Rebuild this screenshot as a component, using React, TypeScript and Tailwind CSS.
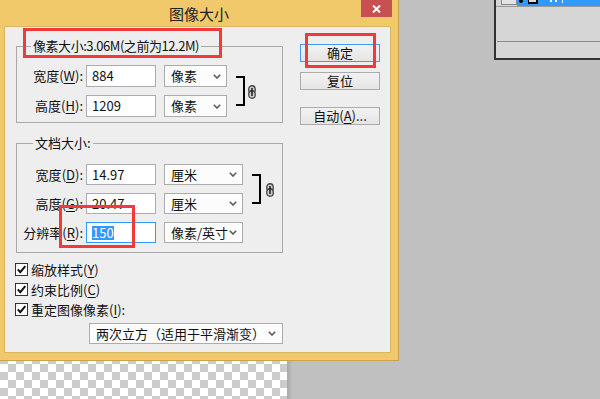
import type React from "react"

function Chevron() {
  return (
    <svg width="8" height="5" viewBox="0 0 8 5" className="shrink-0">
      <path d="M0.8 0.8 L4 4 L7.2 0.8" fill="none" stroke="#5a5a5a" strokeWidth="1.6" />
    </svg>
  )
}

function ChainIcon() {
  return (
    <svg width="8" height="14" viewBox="0 0 8 14" className="shrink-0">
      <rect x="0.75" y="0.75" width="6.5" height="7.5" rx="3.2" fill="#cfcfcf" stroke="#444" strokeWidth="1.3" />
      <rect x="0.75" y="5.75" width="6.5" height="7.5" rx="3.2" fill="#cfcfcf" stroke="#444" strokeWidth="1.3" />
      <line x1="4" y1="3" x2="4" y2="11" stroke="#222" strokeWidth="1.6" />
    </svg>
  )
}

function Label({ text, k, colon = "):" }: { text: string; k: string; colon?: string }) {
  return (
    <div className="w-[69px] shrink-0 pr-[3px] text-right whitespace-nowrap">
      {text}(<span className="underline underline-offset-2">{k}</span>
      {colon}
    </div>
  )
}

function Select({ text, width }: { text: string; width: string }) {
  return (
    <div
      className={`ml-[8px] flex h-full items-center justify-between border border-[#acacac] bg-[#fcfcfc] pr-[5px] pl-[6px] ${width}`}
    >
      <span className="whitespace-nowrap">{text}</span>
      <Chevron />
    </div>
  )
}

function Row({
  label,
  k,
  value,
  unit,
  unitW,
  height,
  focused = false,
}: {
  label: string
  k: string
  value: string
  unit: string
  unitW: string
  height: string
  focused?: boolean
}) {
  return (
    <div className={`flex items-center ${height}`}>
      <Label text={label} k={k} />
      <div
        className={`flex h-full w-[70px] items-center border bg-white pl-[5px] ${
          focused ? "border-[#3399ff]" : "border-[#abadb3]"
        }`}
      >
        {focused ? (
          <span className="bg-[#3399ff] leading-[14px] text-white">{value}</span>
        ) : (
          <span>{value}</span>
        )}
      </div>
      <Select text={unit} width={unitW} />
    </div>
  )
}

function Bracket({ className }: { className: string }) {
  return <div className={`border-t-2 border-r-2 border-b-2 border-black ${className}`} />
}

function Check({ children }: { children: React.ReactNode }) {
  return (
    <div className="flex h-[13px] items-center">
      <div className="flex h-[13px] w-[13px] items-center justify-center border border-[#333] bg-white">
        <svg width="11" height="11" viewBox="0 0 11 11">
          <path d="M1.8 5.4 L4.3 8.2 L9.3 2.2" fill="none" stroke="#111" strokeWidth="2" />
        </svg>
      </div>
      <div className="ml-[3px] whitespace-nowrap">{children}</div>
    </div>
  )
}

function Button({ children, primary = false, className = "" }: { children: React.ReactNode; primary?: boolean; className?: string }) {
  return (
    <div
      className={`flex h-[18px] w-[80px] items-center justify-center border bg-gradient-to-b from-[#f2f2f2] to-[#e5e5e5] ${
        primary ? "border-[#3c9cfc]" : "border-[#acacac]"
      } ${className}`}
    >
      {children}
    </div>
  )
}

export default function App() {
  return (
    <div className="relative h-[399px] w-[600px] overflow-hidden bg-[#c0c0c0] font-['Noto_Sans_CJK_SC',sans-serif] text-[13px] leading-[16px] text-[#111]">
      {/* canvas behind the dialog */}
      <div className="absolute top-[300px] left-0 flex h-[99px]">
        <div className="h-full w-[287px] bg-[image:conic-gradient(#cccccc_25%,#ffffff_0_50%,#cccccc_0_75%,#ffffff_0)] bg-size-[16px_16px]" />
        <div className="h-full w-[5px] bg-gradient-to-r from-[#a9a9a9] to-[#bdbdbd]" />
      </div>

      {/* layers panel */}
      <div className="absolute top-0 left-[494px] h-[60px] w-[106px] border-b-2 border-l-2 border-[#333] bg-[#d6d6d6]">
        <div className="flex h-[7px] border-b border-[#999]">
          <div className="ml-[5px] h-[5px] w-[16px] border-r border-b border-l border-[#8a8a8a] bg-[#e2e2e2]" />
          <div className="flex flex-1 items-start bg-[#3399ff] pl-[2px]">
            <div className="h-[3px] w-[4px] rounded-b-full bg-black" />
            <div className="ml-[5px] h-[4px] w-[10px] border-r-2 border-b-2 border-l border-black bg-[#ddd]" />
            <div className="ml-[12px] flex gap-[3px]">
              <span className="h-[2px] w-[2px] bg-white" />
              <span className="h-[2px] w-[2px] bg-white" />
              <span className="h-[3px] w-[3px] border-r border-white" />
            </div>
          </div>
        </div>
        <div className="mt-[34px] ml-[1px] border-t border-[#8c8c8c]" />
      </div>

      {/* dialog */}
      <div className="absolute top-0 left-0 flex h-[361px] w-[399px] flex-col border-r border-b border-[#c9a352] bg-[#f1c86a]">
        <div className="relative flex h-[26px] shrink-0 items-center justify-center">
          <span className="mt-[1px] text-[15px] text-[#222]">图像大小</span>
          <div className="absolute top-0 right-[6px] flex h-[17px] w-[31px] items-center justify-center bg-[#c75050]">
            <svg width="9" height="8" viewBox="0 0 9 8">
              <path d="M1 0.5 L8 7.5 M8 0.5 L1 7.5" stroke="#fff" strokeWidth="2" />
            </svg>
          </div>
        </div>

        <div className="ml-[4px] flex h-[327px] w-[387px] border border-[#d8b663] bg-[#eeeeee] pt-[12px] pl-[11px]">
          <div className="flex w-[267px] flex-col">
            <fieldset className="border border-[#a9a9a9] pb-[5px]">
              <legend className="ml-[14px] px-[2px] leading-[14px] tracking-[-0.45px] whitespace-nowrap">
                像素大小:3.06M(之前为12.2M)
              </legend>
              <div className="flex items-center pt-[12px]">
                <div className="flex flex-col gap-[8px]">
                  <Row label="宽度" k="W" value="884" unit="像素" unitW="w-[63px]" height="h-[22px]" />
                  <Row label="高度" k="H" value="1209" unit="像素" unitW="w-[63px]" height="h-[22px]" />
                </div>
                <Bracket className="ml-[9px] h-[30px] w-[9px]" />
                <div className="ml-[3px] pt-[2px]">
                  <ChainIcon />
                </div>
              </div>
            </fieldset>

            <fieldset className="mt-[13px] border border-[#a9a9a9] pb-[9px]">
              <legend className="ml-[16px] px-[2px] leading-[14px]">文档大小:</legend>
              <div className="flex flex-col gap-[8px] pt-[14px]">
                <div className="flex items-center">
                  <div className="flex flex-col gap-[8px]">
                    <Row label="宽度" k="D" value="14.97" unit="厘米" unitW="w-[79px]" height="h-[21px]" />
                    <Row label="高度" k="G" value="20.47" unit="厘米" unitW="w-[79px]" height="h-[21px]" />
                  </div>
                  <Bracket className="ml-[9px] h-[30px] w-[9px]" />
                  <div className="ml-[5px] pt-[2px]">
                    <ChainIcon />
                  </div>
                </div>
                <Row label="分辨率" k="R" value="150" unit="像素/英寸" unitW="w-[79px]" height="h-[21px]" focused />
              </div>
            </fieldset>

            <div className="mt-[10px] -ml-[1px] flex flex-col gap-[7px]">
              <Check>
                缩放样式(<span className="underline underline-offset-2">Y</span>)
              </Check>
              <Check>
                约束比例(<span className="underline underline-offset-2">C</span>)
              </Check>
              <Check>
                重定图像像素(<span className="underline underline-offset-2">I</span>):
              </Check>
            </div>

            <div className="mt-[7px] ml-[73px] flex h-[21px] w-[194px] items-center justify-between border border-[#acacac] bg-[#fcfcfc] pr-[6px] pl-[6px]">
              <span className="whitespace-nowrap">两次立方（适用于平滑渐变）</span>
              <Chevron />
            </div>
          </div>

          <div className="mt-[5px] ml-[17px] flex flex-col">
            <Button primary>确定</Button>
            <Button className="mt-[10px]">复位</Button>
            <Button className="mt-[17px]">
              自动(<span className="underline underline-offset-2">A</span>)...
            </Button>
          </div>
        </div>
      </div>

      {/* red annotation boxes */}
      <div className="absolute top-[28px] left-[23px] h-[30px] w-[199px] border-[3px] border-[#f23a3a]" />
      <div className="absolute top-[205px] left-[59px] h-[43px] w-[76px] border-[3px] border-[#f23a3a]" />
      <div className="absolute top-[33px] left-[305px] h-[35px] w-[71px] border-[3px] border-[#f23a3a]" />
    </div>
  )
}
